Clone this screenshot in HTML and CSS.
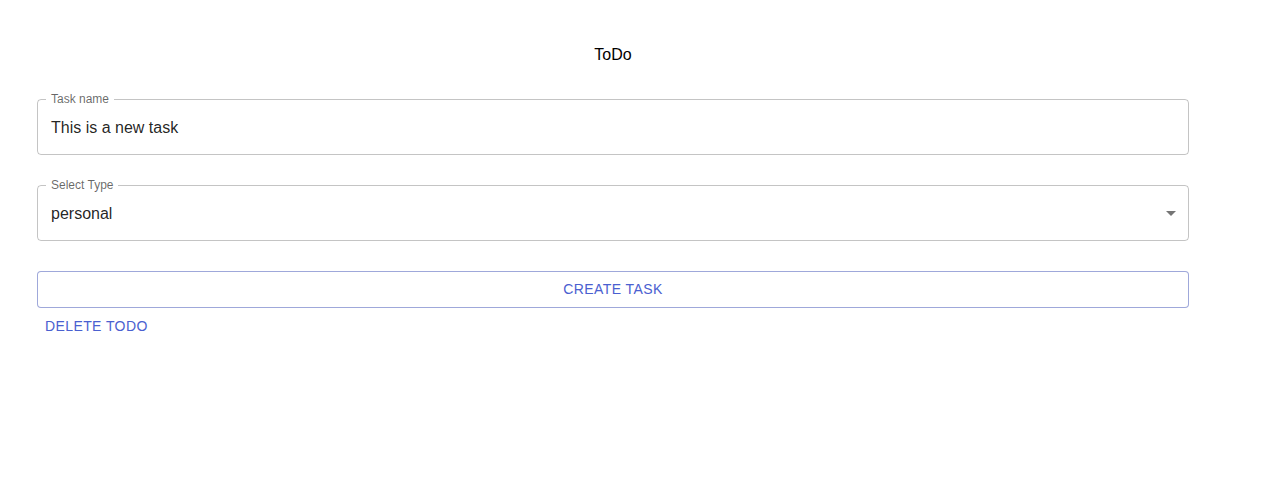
FILE: index.html
```html
<!DOCTYPE html>
<html>
<head>
<meta charset="utf-8">
<link rel="stylesheet" href="styles.css">
</head>
<body>
<div class="page">
  <h1 class="title">ToDo</h1>
  <form class="form">
    <div class="field">
      <fieldset class="outline"><legend class="notch">Task name</legend></fieldset>
      <div class="value">This is a new task</div>
    </div>
    <div class="field">
      <fieldset class="outline"><legend class="notch">Select Type</legend></fieldset>
      <div class="value">personal</div>
      <svg class="arrow" viewBox="0 0 24 24" width="24" height="24"><path d="M7 10l5 5 5-5z"/></svg>
    </div>
    <div class="actions">
      <button type="button" class="btn-outlined">Create Task</button>
      <button type="button" class="btn-text">Delete Todo</button>
    </div>
  </form>
</div>
</body>
</html>
```

FILE: styles.css
```css
html, body {
  margin: 0;
  padding: 0;
  background: #fff;
}
body {
  font-family: "Liberation Sans", Arial, sans-serif;
  color: rgba(0,0,0,0.87);
}
.page {
  width: 1152px;
  padding: 45px 0 0 37px;
}
.title {
  margin: 0;
  font-size: 16px;
  font-weight: 400;
  line-height: 20px;
  text-align: center;
  color: #000;
}
.form {
  margin-top: 34px;
  display: flex;
  flex-direction: column;
  gap: 30px;
}
.field {
  position: relative;
  height: 56px;
  box-sizing: border-box;
  padding: 0 14px;
  display: flex;
  align-items: center;
}
.outline {
  position: absolute;
  left: 0;
  right: 0;
  top: -5px;
  bottom: 0;
  margin: 0;
  padding: 0 8px;
  border: 1px solid rgba(0,0,0,0.23);
  border-radius: 4px;
  pointer-events: none;
}
.notch {
  padding: 0 5px;
  font-size: 12px;
  line-height: 11px;
  color: rgba(0,0,0,0.6);
}
.value {
  font-size: 16px;
  line-height: 23px;
  color: rgba(0,0,0,0.87);
  padding-top: 1px;
}
.arrow {
  position: absolute;
  right: 6px;
  top: 16px;
  fill: rgba(0,0,0,0.54);
}
.actions {
  display: flex;
  flex-direction: column;
  align-items: flex-start;
}
.btn-outlined {
  width: 100%;
  height: 37px;
  box-sizing: border-box;
  border: 1px solid rgba(63,81,181,0.5);
  border-radius: 4px;
  background: #fff;
  color: #4a60d0;
  font-family: "Liberation Sans", Arial, sans-serif;
  font-size: 14px;
  letter-spacing: 0.4px;
  text-transform: uppercase;
  padding: 0 15px 1px;
  cursor: pointer;
}
.btn-text {
  height: 36px;
  border: 0;
  background: transparent;
  color: #4a60d0;
  font-family: "Liberation Sans", Arial, sans-serif;
  font-size: 14px;
  letter-spacing: 0.4px;
  text-transform: uppercase;
  padding: 0 8px;
  cursor: pointer;
}
```
